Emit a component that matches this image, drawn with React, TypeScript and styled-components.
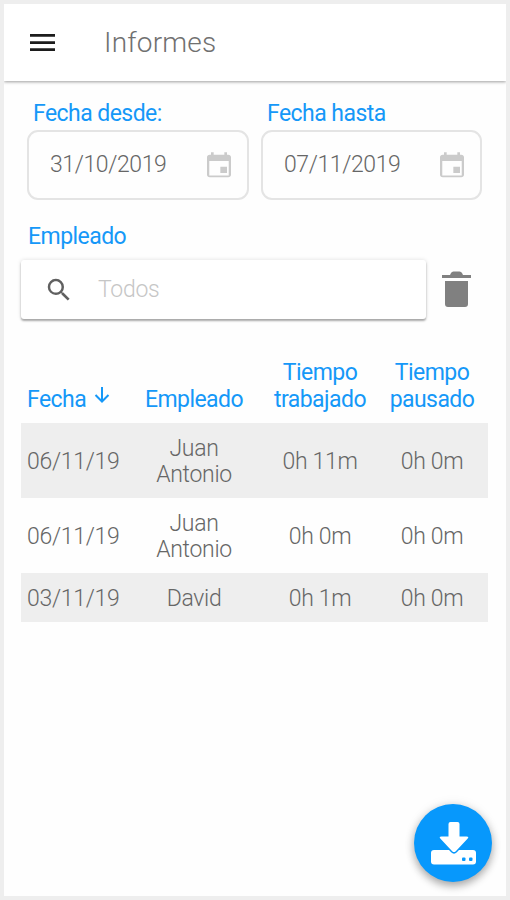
import React from 'react';
import styled, { createGlobalStyle } from 'styled-components';

const GlobalStyle = createGlobalStyle`
  * { box-sizing: border-box; }
  body { margin: 0; background: #eeeeee; }
`;

const Screen = styled.div`
  position: relative;
  height: 900px;
  width: 510px;
  border: 4px solid #eeeeee;
  background: #fefefe;
  color: #666666;
  font: 300 23px/26.5px Roboto, sans-serif;
  letter-spacing: -0.3px;
  overflow: hidden;
`;

const Toolbar = styled.header`
  display: flex;
  align-items: center;
  height: 77px;
  padding-left: 26px;
  background: #ffffff;
  box-shadow: 0 1px 3px rgba(0, 0, 0, 0.38);
`;

const Title = styled.h1`
  margin: 0 0 0 49px;
  font-size: 28px;
  line-height: 34px;
  font-weight: 300;
  letter-spacing: 0.2px;
  color: #707070;
`;

const Dates = styled.section`
  display: grid;
  grid-template-columns: 222px 221px;
  column-gap: 12px;
  padding: 20px 0 0 23px;
`;

const Label = styled.label<{ $inset?: number }>`
  display: block;
  padding-left: ${({ $inset = 0 }) => $inset}px;
  font-size: 23px;
  line-height: 26px;
  font-weight: 400;
  letter-spacing: -0.55px;
  color: #1598f8;
`;

const DateBox = styled.div`
  display: flex;
  align-items: center;
  justify-content: space-between;
  height: 70px;
  margin-top: 3px;
  padding: 1px 12px 0 21px;
  border: 2px solid #e4e4e4;
  border-radius: 11px;
  letter-spacing: -0.4px;
`;

const Filter = styled.section`
  padding: 24px 0 0 17px;
`;

const FilterRow = styled.div`
  display: flex;
  align-items: center;
  margin-top: 10px;
`;

const Search = styled.div`
  display: flex;
  align-items: center;
  width: 405px;
  height: 59px;
  padding: 1px 0 0 23px;
  gap: 24px;
  border-radius: 3px;
  background: #ffffff;
  color: #c6c6c6;
  box-shadow: 0 2px 2px rgba(0, 0, 0, 0.3), 0 0 4px rgba(0, 0, 0, 0.13);
`;

const ClearButton = styled.button`
  display: flex;
  margin: 0 0 0 16px;
  padding: 0;
  border: 0;
  background: none;
`;

const Table = styled.div`
  width: 467px;
  margin: 36px 0 0 17px;
`;

const Row = styled.div<{ $shaded?: boolean; $head?: boolean }>`
  display: grid;
  grid-template-columns: 103px 140px 112px 112px;
  align-items: ${({ $head }) => ($head ? 'end' : 'center')};
  padding: ${({ $head }) => ($head ? '5px 0 10px' : '12.5px 0 9.7px')};
  background: ${({ $shaded }) => ($shaded ? '#eeeeee' : 'transparent')};
  color: ${({ $head }) => ($head ? '#1598f8' : '#666666')};
  font-weight: ${({ $head }) => ($head ? 400 : 300)};
  letter-spacing: ${({ $head }) => ($head ? -0.55 : -0.3)}px;
`;

const Cell = styled.div<{ $first?: boolean }>`
  display: flex;
  justify-content: ${({ $first }) => ($first ? 'flex-start' : 'center')};
  padding-left: ${({ $first }) => ($first ? 6 : 0)}px;
  text-align: center;
  white-space: pre-line;
`;

const DownloadButton = styled.button`
  position: absolute;
  right: 14px;
  bottom: 14px;
  display: flex;
  align-items: center;
  justify-content: center;
  width: 78px;
  height: 78px;
  padding: 0;
  border: 0;
  border-radius: 50%;
  background: #0798fc;
  box-shadow: 0 4px 8px rgba(0, 0, 0, 0.32), 0 0 12px rgba(0, 0, 0, 0.08);
`;

const MenuIcon = () => (
  <svg width="25" height="20" viewBox="0 0 25 20" fill="#1c1c1c">
    <path d="M0 1h25v2.7H0zM0 8.2h25v2.7H0zM0 15.2h25v2.7H0z" />
  </svg>
);

const CalendarGlyph = styled.svg`
  margin-bottom: -1px;
`;

const CalendarIcon = () => (
  <CalendarGlyph width="32" height="30" viewBox="0 0 24 24" preserveAspectRatio="none" fill="#cbcbcb">
    <path d="M18 12.500h-5v5h5v-5zM16 1v2H8V1H6v2H5c-1.110 0-2 .9-2 2v14c0 1.100.89 2 2 2h14c1.100 0 2-.9 2-2V5c0-1.100-.9-2-2-2h-1V1h-2zm3.300 18.500H4.700V8h14.600v11.500z" />
  </CalendarGlyph>
);

const SearchIcon = () => (
  <svg width="30" height="30" viewBox="0 0 24 24" fill="#606060">
    <path d="M15.5 14h-.79l-.28-.27A6.47 6.47 0 0 0 16 9.5 6.5 6.5 0 1 0 9.500 16c1.610 0 3.090-.59 4.230-1.570l.27.28v.79l5 4.990L20.490 19l-4.990-5zm-6 0C7.010 14 5 11.990 5 9.500S7.010 5 9.500 5 14 7.010 14 9.500 11.990 14 9.500 14z" />
  </svg>
);

const TrashIcon = () => (
  <svg width="29" height="37" viewBox="0 0 29 37" fill="#808080">
    <path d="M0 4h8l1-2q.7-1.500 2.500-1.500h6q1.800 0 2.500 1.500l1 2h8v3H0zM3 10h23v23q0 3-3 3H6q-3 0-3-3z" />
  </svg>
);

const SortArrow = styled.svg`
  margin: 0 0 0 8px;
`;

const DownloadIcon = () => (
  <svg width="46" height="43" viewBox="0 0 46 43">
    <rect x="1" y="28" width="45" height="14.500" rx="3" fill="#ffffff" />
    <path
      d="M18.500 2q0-2 2-2h7q2 0 2 2v12.500h7q3 0 1 2.300L25.800 29.200q-1.800 1.800-3.600 0L10.500 16.800q-2-2.300 1-2.300h7z"
      fill="#ffffff"
      stroke="#0798fc"
      strokeWidth="3"
      paintOrder="stroke"
    />
    <rect x="32" y="35.500" width="3.500" height="3.500" rx="1" fill="#0798fc" />
    <rect x="39" y="35.500" width="3.500" height="3.500" rx="1" fill="#0798fc" />
  </svg>
);

const records = [
  { date: '06/11/19', employee: 'Juan\nAntonio', worked: '0h 11m', paused: '0h 0m' },
  { date: '06/11/19', employee: 'Juan\nAntonio', worked: '0h 0m', paused: '0h 0m' },
  { date: '03/11/19', employee: 'David', worked: '0h 1m', paused: '0h 0m' },
];

export default function App() {
  return (
    <Screen>
      <GlobalStyle />
      <Toolbar>
        <MenuIcon />
        <Title>Informes</Title>
      </Toolbar>
      <Dates>
        <div>
          <Label $inset={6}>Fecha desde:</Label>
          <DateBox>31/10/2019<CalendarIcon /></DateBox>
        </div>
        <div>
          <Label $inset={6}>Fecha hasta</Label>
          <DateBox>07/11/2019<CalendarIcon /></DateBox>
        </div>
      </Dates>
      <Filter>
        <Label $inset={7}>Empleado</Label>
        <FilterRow>
          <Search><SearchIcon />Todos</Search>
          <ClearButton aria-label="Borrar"><TrashIcon /></ClearButton>
        </FilterRow>
      </Filter>
      <Table>
        <Row $head>
          <Cell $first>
            Fecha
            <SortArrow width="16" height="17" viewBox="0 0 16 17" fill="none" stroke="#1598f8" strokeWidth="2">
              <path d="M8 0v14M1.500 8L8 14.500 14.500 8" />
            </SortArrow>
          </Cell>
          <Cell>Empleado</Cell>
          <Cell>{'Tiempo\ntrabajado'}</Cell>
          <Cell>{'Tiempo\npausado'}</Cell>
        </Row>
        {records.map((record, i) => (
          <Row key={i} $shaded={i % 2 === 0}>
            <Cell $first>{record.date}</Cell>
            <Cell>{record.employee}</Cell>
            <Cell>{record.worked}</Cell>
            <Cell>{record.paused}</Cell>
          </Row>
        ))}
      </Table>
      <DownloadButton aria-label="Descargar"><DownloadIcon /></DownloadButton>
    </Screen>
  );
}
